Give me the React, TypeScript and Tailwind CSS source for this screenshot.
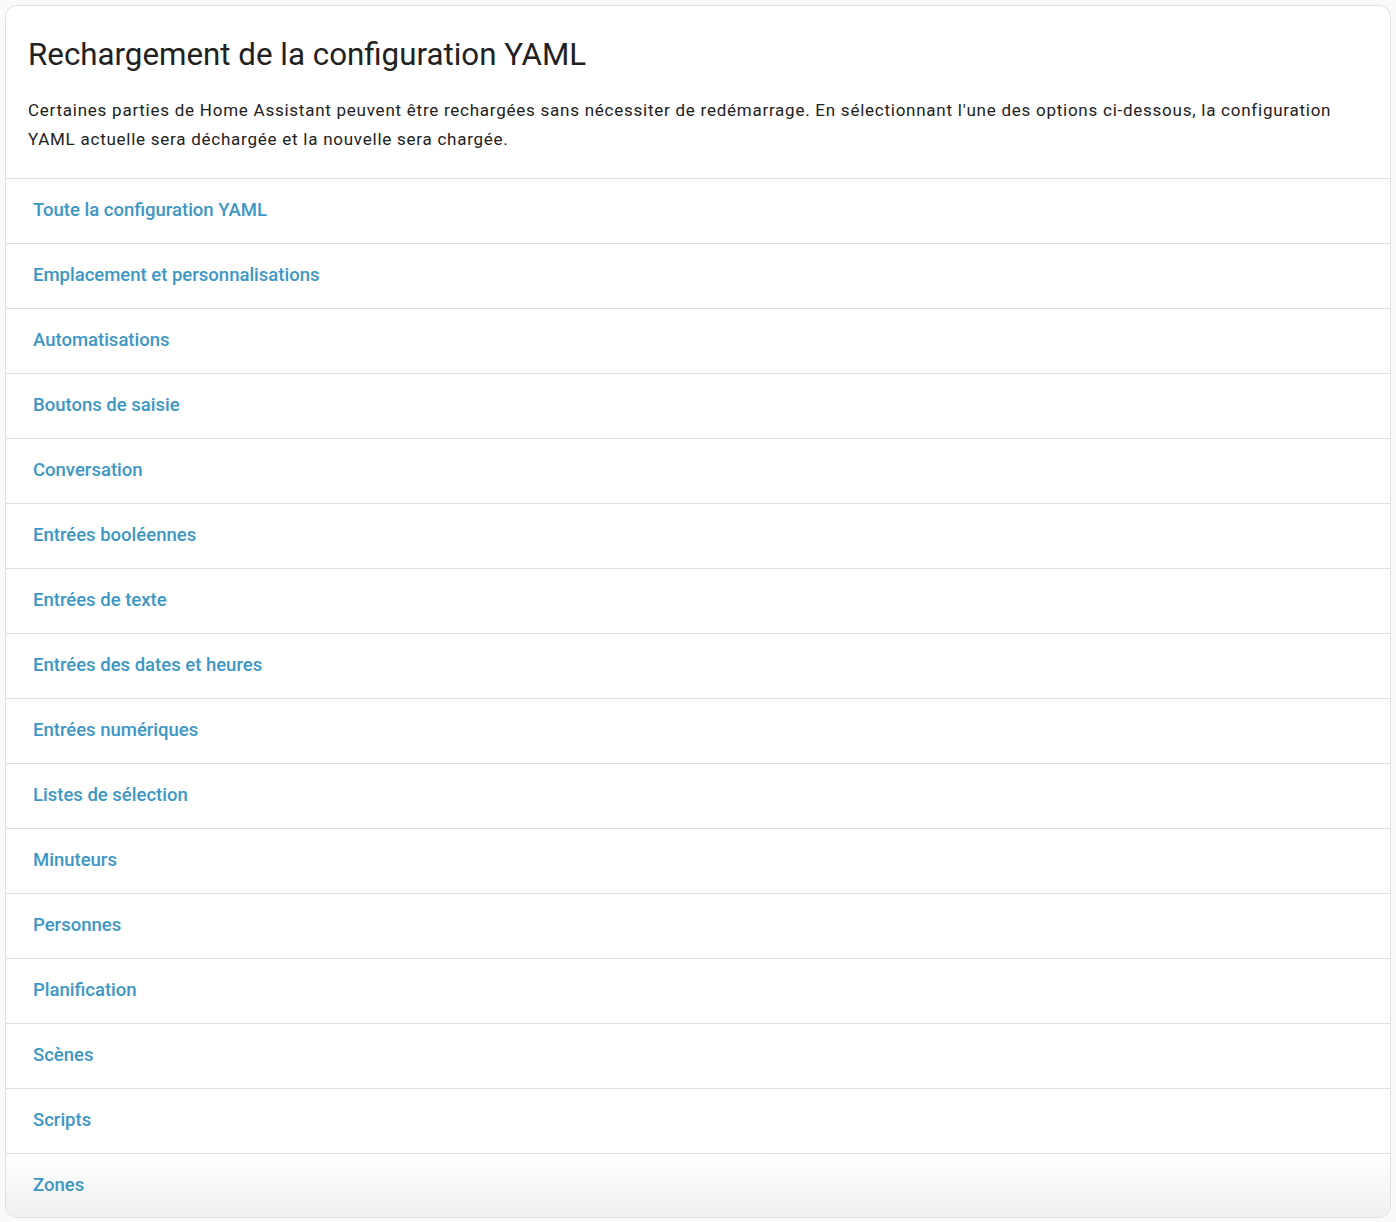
const items = [
  "Toute la configuration YAML",
  "Emplacement et personnalisations",
  "Automatisations",
  "Boutons de saisie",
  "Conversation",
  "Entrées booléennes",
  "Entrées de texte",
  "Entrées des dates et heures",
  "Entrées numériques",
  "Listes de sélection",
  "Minuteurs",
  "Personnes",
  "Planification",
  "Scènes",
  "Scripts",
  "Zones",
];

export default function App() {
  return (
    <div className="min-h-screen bg-[#fafafa] p-[5px] font-['Roboto',sans-serif]">
      <div className="overflow-hidden rounded-[12px] border border-[#e0e0e0] bg-white">
        <div className="px-[22px] pt-[30px] pb-[24px]">
          <h1 className="text-[31.3px] leading-[38px] text-[#212121]">
            Rechargement de la configuration YAML
          </h1>
          <p className="mt-[22px] text-[17px] leading-[29px] tracking-[0.75px] text-[#212121]">
            Certaines parties de Home Assistant peuvent être rechargées sans nécessiter de redémarrage. En
            sélectionnant l'une des options ci-dessous, la configuration
            <br />
            YAML actuelle sera déchargée et la nouvelle sera chargée.
          </p>
        </div>
        {items.map((label, i) => (
          <div
            key={label}
            className={
              i === items.length - 1
                ? "flex h-[64px] items-center border-t border-[#e0e0e0] bg-gradient-to-b from-white to-[#f0f0f0] px-[27px]"
                : "flex h-[65px] items-center border-t border-[#e0e0e0] px-[27px]"
            }
          >
            <span className="text-[18.5px] font-medium text-[#3d97c6]">{label}</span>
          </div>
        ))}
      </div>
    </div>
  );
}
